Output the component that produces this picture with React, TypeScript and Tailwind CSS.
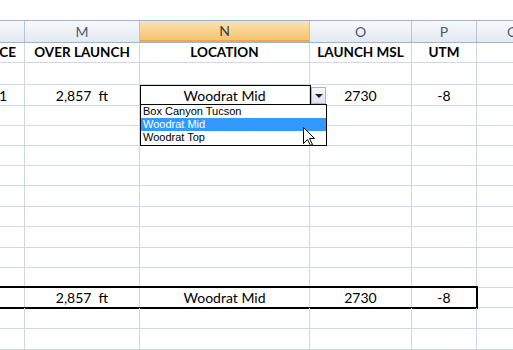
import React from 'react';

const COLS = ['L', 'M', 'N', 'O', 'P', 'Q'];
const COL_W = ['w-[91px]', 'w-[115px]', 'w-[170px]', 'w-[102px]', 'w-[65px]', 'w-[72px]'];

const ROW_H: Record<number, string> = {
  20: 'h-[20px]',
  21: 'h-[21px]',
  22: 'h-[22px]',
};

// row heights (incl. bottom gridline) for rows 1..15
const heights = [20, 22, 21, 20, 20, 20, 20, 21, 20, 21, 20, 20, 20, 21, 21];

type Cell = { text: string; align?: 'center' | 'right'; bold?: boolean; pr?: string };

const rows: Record<number, Cell[]> = {
  0: [
    { text: 'DISTANCE', align: 'right', bold: true, pr: 'pr-[8px]' },
    { text: 'OVER LAUNCH', bold: true },
    { text: 'LOCATION', bold: true },
    { text: 'LAUNCH MSL', bold: true },
    { text: 'UTM', bold: true },
  ],
  2: [
    { text: '1', align: 'right', pr: 'pr-[17px]' },
    { text: '2,857  ft' },
    { text: 'Woodrat Mid' },
    { text: '2730' },
    { text: '-8' },
  ],
  12: [
    { text: '' },
    { text: '2,857  ft' },
    { text: 'Woodrat Mid' },
    { text: '2730' },
    { text: '-8' },
  ],
};

function Cursor() {
  return (
    <svg width="13" height="20" viewBox="0 0 13 20" className="absolute left-[163px] top-[42px] z-30">
      <path
        d="M0.5 0.5 L0.5 16.5 L4.5 12.5 L7.5 18.5 L9.5 17.5 L6.5 11.5 L11.5 11.5 Z"
        fill="#fff"
        stroke="#000"
        strokeWidth="1"
      />
    </svg>
  );
}

function Dropdown() {
  const items = ['Box Canyon Tucson', 'Woodrat Mid', 'Woodrat Top'];
  return (
    <>
      <div className="absolute left-0 top-0 w-[171px] h-[20px] border border-black z-10 pointer-events-none" />
      <div className="absolute left-[171px] top-[2px] w-[15px] h-[17px] border border-[#a7b6cb] bg-gradient-to-b from-[#f4f7fb] to-[#d9e2ee] flex items-center justify-center z-20">
        <div className="w-0 h-0 border-l-[4px] border-r-[4px] border-t-[4px] border-l-transparent border-r-transparent border-t-[#222]" />
      </div>
      <div className="absolute left-0 top-[19px] w-[187px] h-[42px] border border-black bg-white z-20 flex flex-col font-['Liberation_Sans',sans-serif] text-[11px] leading-[13px] text-black">
        {items.map((it) => (
          <div
            key={it}
            className={
              it === 'Woodrat Mid'
                ? 'h-[13px] pl-[2px] bg-[#3399ff] text-white'
                : 'h-[13px] pl-[2px]'
            }
          >
            {it}
          </div>
        ))}
      </div>
      <Cursor />
    </>
  );
}

export default function App() {
  return (
    <div className="w-[513px] h-[350px] overflow-hidden bg-white font-['Lato',sans-serif] text-[14px] text-black">
      <div className="pt-[20px]">
        <div className="ml-[-66px] w-[620px]">
          {/* column letters */}
          <div className="flex h-[23px] border-t border-b border-[#9fb4cc]">
            {COLS.map((c, i) => (
              <div
                key={c}
                className={
                  COL_W[i] +
                  ' shrink-0 border-r border-[#b4c4d8] flex items-center justify-center text-[14px] ' +
                  (c === 'N'
                    ? 'bg-gradient-to-b from-[#fbe2b2] to-[#f6c46e] text-[#3b3b3b] border-b-2 border-b-[#f2a54a]'
                    : 'bg-gradient-to-b from-[#f7f9fc] to-[#e3e9f1] text-[#4c5b72]')
                }
              >
                {c}
              </div>
            ))}
          </div>

          {heights.map((h, r) => {
            const data = rows[r];
            const isTotal = r === 12;
            return (
              <div key={r} className={'flex relative ' + ROW_H[h]}>
                {COLS.map((c, i) => {
                  const cell = data?.[i];
                  const align = cell?.align === 'right' ? 'justify-end' : 'justify-center';
                  return (
                    <div
                      key={c}
                      className={
                        COL_W[i] +
                        ' shrink-0 relative border-r border-b border-[#d0d7e5] flex items-center whitespace-pre ' +
                        align +
                        (cell?.pr ? ' ' + cell.pr : '') +
                        (cell?.bold ? ' font-bold text-[13.5px]' : '')
                      }
                    >
                      {cell?.text}
                      {r === 2 && c === 'N' && <Dropdown />}
                    </div>
                  );
                })}
                {isTotal && (
                  <div className="absolute left-[60px] top-[-2px] w-[484px] h-[23px] border-2 border-black pointer-events-none" />
                )}
              </div>
            );
          })}
        </div>
      </div>
    </div>
  );
}
